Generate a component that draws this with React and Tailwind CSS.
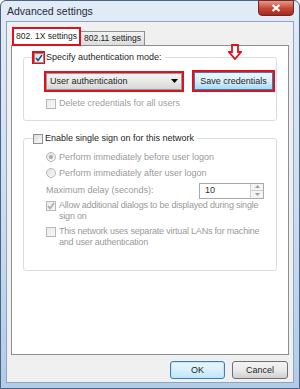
import React from 'react'

function Check({ checked, disabled, red }) {
  return (
    <span
      className={
        'relative inline-flex items-center justify-center shrink-0 ' +
        (red ? 'w-[13px] h-[13px] border-2 border-[#e0101c] bg-white' : '')
      }
    >
      <span
        className={
          'w-[10px] h-[10px] border flex items-center justify-center bg-gradient-to-br ' +
          (disabled
            ? 'border-[#b8b8b8] from-[#ececec] to-[#f7f7f7]'
            : 'border-[#8f8f8f] from-[#dcdcdc] to-[#fafafa]')
        }
      >
        {checked && (
          <svg width="8" height="8" viewBox="0 0 8 8">
            <path
              d="M1 4 L3 6.5 L7 1"
              fill="none"
              stroke={disabled ? '#a8a8a8' : '#2a3e82'}
              strokeWidth="1.4"
            />
          </svg>
        )}
      </span>
    </span>
  )
}

function Radio({ checked }) {
  return (
    <span className="w-[10px] h-[10px] rounded-full border border-[#b8b8b8] bg-gradient-to-br from-[#e2e2e2] to-[#f8f8f8] flex items-center justify-center shrink-0">
      {checked && <span className="w-[4px] h-[4px] rounded-full bg-[#a9a9a9]" />}
    </span>
  )
}

function SpinBox({ value }) {
  return (
    <div className="flex shrink-0 h-[16px] border border-[#a6abb3] bg-white text-[#333]">
      <div className="w-[50px] flex items-center pl-[5px]">{value}</div>
      <div className="w-[13px] flex flex-col border-l border-[#d0d0d0] bg-[#f4f4f4]">
        <div className="flex-1 flex items-center justify-center border-b border-[#d0d0d0]">
          <svg width="5" height="3" viewBox="0 0 5 3"><path d="M0 3 L2.5 0 L5 3 Z" fill="#a0a0a0" /></svg>
        </div>
        <div className="flex-1 flex items-center justify-center">
          <svg width="5" height="3" viewBox="0 0 5 3"><path d="M0 0 L2.5 3 L5 0 Z" fill="#a0a0a0" /></svg>
        </div>
      </div>
    </div>
  )
}

export default function App() {
  return (
    <div
      className="w-[300px] h-[389px] overflow-hidden bg-white"
      style={{ fontFamily: '"Liberation Sans", Arial, sans-serif' }}
    >
      <div className="w-[300px] h-[389px] flex flex-col rounded-t-[6px] border border-[#4b6485] bg-gradient-to-b from-[#e2ecf7] via-[#cddef1] to-[#b3cbe7]">
        {/* Title bar */}
        <div className="h-[20px] flex items-start justify-between shrink-0">
          <div className="pl-[6px] pt-[4px] text-[10.5px] text-[#1e2b3a] leading-[12px]">Advanced settings</div>
          <div className="mr-[5px] w-[36px] h-[16px] -mt-px rounded-b-[4px] border border-[#6b2a2a] bg-gradient-to-b from-[#e09a8a] via-[#c8483a] to-[#a82818] flex items-center justify-center">
            <svg width="10" height="8" viewBox="0 0 10 8">
              <path d="M1.5 1 L8.5 7 M8.5 1 L1.5 7" stroke="#fff" strokeWidth="2.2" />
            </svg>
          </div>
        </div>

        {/* Client area */}
        <div className="flex-1 mx-[5px] mb-[5px] border border-[#8fa6c2] bg-[#f0f0f0] flex flex-col px-[4px] pt-[6px] text-[9px] leading-[11px] text-[#1e1e1e]">
          {/* Tabs */}
          <div className="flex items-end h-[17px] pl-[1px] relative z-10 text-[8.5px]">
            <div className="w-[69px] h-[19px] -mb-px border-2 border-[#e0101c] bg-white flex items-center justify-center">
              802. 1X settings
            </div>
            <div className="w-[64px] h-[14px] border border-b-0 border-l-0 border-[#8e8f8f] bg-gradient-to-b from-[#f2f2f2] to-[#dcdcdc] flex items-center justify-center">
              802.11 settings
            </div>
          </div>

          {/* Tab panel */}
          <div className="h-[310px] border border-[#8e8f8f] bg-white px-[11px] pt-[5px] flex flex-col">
            {/* Group 1 */}
            <div className="relative">
              <fieldset className="min-w-0 border border-[#d5dfe5] rounded-[3px] h-[70px] p-0">
                <legend className="ml-[8px] flex items-center pr-[3px]">
                  <Check checked red />
                  <span className="ml-[1px]">Specify authentication mode:</span>
                </legend>
                <div className="pl-[20px] pt-[6px]">
                  <div className="flex items-center gap-[8px]">
                    <div className="w-[140px] h-[21px] shrink-0 border-2 border-[#e0101c] flex">
                      <div className="flex-1 border border-[#9a9a9a] bg-gradient-to-b from-[#f4f4f4] via-[#e8e8e8] to-[#d6d6d6] flex items-center justify-between px-[3px]">
                        <span>User authentication</span>
                        <svg width="7" height="4" viewBox="0 0 7 4">
                          <path d="M0 0 H7 L3.5 4 Z" fill="#000" />
                        </svg>
                      </div>
                    </div>
                    <div className="w-[83px] h-[22px] shrink-0 border-2 border-[#e0101c] flex">
                      <div className="flex-1 border border-[#3c7fb1] bg-gradient-to-b from-[#eaf6fd] via-[#d9f0fc] to-[#a7d9f5] flex items-center justify-center">
                        Save credentials
                      </div>
                    </div>
                  </div>
                  <div className="flex items-center gap-[3px] mt-[6px] pl-[2px] text-[#a0a0a0]">
                    <Check disabled />
                    <span>Delete credentials for all users</span>
                  </div>
                </div>
              </fieldset>
              {/* Red arrow */}
              <svg className="absolute left-[205px] -top-[7px]" width="14" height="16" viewBox="0 0 14 16">
                <path
                  d="M4 1 H10 V8 H13 L7 15 L1 8 H4 Z"
                  fill="#fff"
                  stroke="#e0101c"
                  strokeWidth="1.8"
                  strokeLinejoin="miter"
                />
              </svg>
            </div>

            {/* Group 2 */}
            <fieldset className="min-w-0 mt-[12px] border border-[#d5dfe5] rounded-[3px] h-[138px] p-0">
              <legend className="ml-[9px] flex items-center gap-[2px] pr-[3px]">
                <Check />
                <span>Enable single sign on for this network</span>
              </legend>
              <div className="flex flex-col text-[#9a9a9a] pl-[22px] pr-[12px] pt-[5px]">
                <div className="flex items-center gap-[3px] h-[16px]">
                  <Radio checked />
                  <span>Perform immediately before user logon</span>
                </div>
                <div className="flex items-center gap-[3px] h-[16px]">
                  <Radio />
                  <span>Perform immediately after user logon</span>
                </div>
                <div className="flex items-center justify-between h-[17px] mt-[1px]">
                  <span>Maximum delay (seconds):</span>
                  <SpinBox value="10" />
                </div>
                <div className="flex items-start gap-[3px] mt-[1px] tracking-[-0.2px] whitespace-nowrap">
                  <span className="mt-px"><Check checked disabled /></span>
                  <span>Allow additional dialogs to be displayed during single<br />sign on</span>
                </div>
                <div className="flex items-start gap-[3px] mt-[4px] tracking-[-0.2px] whitespace-nowrap">
                  <span className="mt-px"><Check disabled /></span>
                  <span>This network uses separate virtual LANs for machine<br />and user authentication</span>
                </div>
              </div>
            </fieldset>
          </div>

          {/* Buttons */}
          <div className="flex justify-end gap-[7px] mt-[6px] pr-[1px]">
            <div className="w-[55px] h-[18px] rounded-[3px] border border-[#3c7fb1] bg-gradient-to-b from-[#eaf6fd] via-[#d9f0fc] to-[#bde6fd] shadow-[inset_0_0_0_1px_#c0e4f8] flex items-center justify-center">
              OK
            </div>
            <div className="w-[56px] h-[18px] rounded-[3px] border border-[#707070] bg-gradient-to-b from-[#f2f2f2] via-[#ebebeb] to-[#cfcfcf] flex items-center justify-center">
              Cancel
            </div>
          </div>
        </div>
      </div>
    </div>
  )
}
